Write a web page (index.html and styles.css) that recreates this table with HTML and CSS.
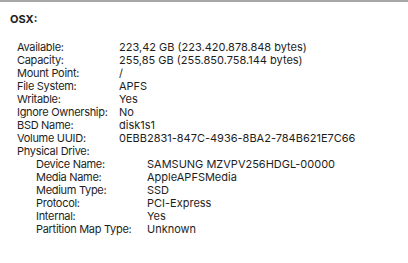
FILE: index.html
```html
<!DOCTYPE html>
<html lang="en">
<head>
  <meta charset="UTF-8">
  <title>OSX Volume</title>
  <link rel="stylesheet" href="styles.css">
</head>
<body>
  <div class="panel">
    <h2 class="volume-title">OSX:</h2>

    <dl class="info-list">
      <dt>Available:</dt><dd>223,42 GB (223.420.878.848 bytes)</dd>
      <dt>Capacity:</dt><dd>255,85 GB (255.850.758.144 bytes)</dd>
      <dt>Mount Point:</dt><dd>/</dd>
      <dt>File System:</dt><dd>APFS</dd>
      <dt>Writable:</dt><dd>Yes</dd>
      <dt>Ignore Ownership:</dt><dd>No</dd>
      <dt>BSD Name:</dt><dd>disk1s1</dd>
      <dt>Volume UUID:</dt><dd>0EBB2831-847C-4936-8BA2-784B621E7C66</dd>
      <dt class="group">Physical Drive:</dt>
    </dl>

    <dl class="info-list nested">
      <dt>Device Name:</dt><dd>SAMSUNG MZVPV256HDGL-00000</dd>
      <dt>Media Name:</dt><dd>AppleAPFSMedia</dd>
      <dt>Medium Type:</dt><dd>SSD</dd>
      <dt>Protocol:</dt><dd>PCI-Express</dd>
      <dt>Internal:</dt><dd>Yes</dd>
      <dt>Partition Map Type:</dt><dd>Unknown</dd>
    </dl>
  </div>
</body>
</html>
```

FILE: styles.css
```css
body {
  margin: 0;
  background-color: #fff;
  font-family: Inter, "Liberation Sans", Arial, sans-serif;
  font-size: 11px;
  line-height: 13px;
  color: #1e1e1e;
}

.panel {
  border-top: 2px solid #a8a8a8;
  padding: 11px 10px 0 10px;
}

.volume-title {
  margin: 0 0 15px 0;
  font-size: 11px;
  font-weight: bold;
  line-height: 13px;
}

.info-list {
  display: grid;
  grid-template-columns: 102px 1fr;
  margin: 0;
  padding-left: 7px;
}

.info-list dt,
.info-list dd {
  margin: 0;
  white-space: nowrap;
}

.info-list dt {
  letter-spacing: -0.3px;
}

.info-list .group {
  grid-column: 1 / 3;
}

.nested {
  grid-template-columns: 111px 1fr;
  padding-left: 26px;
}
```
